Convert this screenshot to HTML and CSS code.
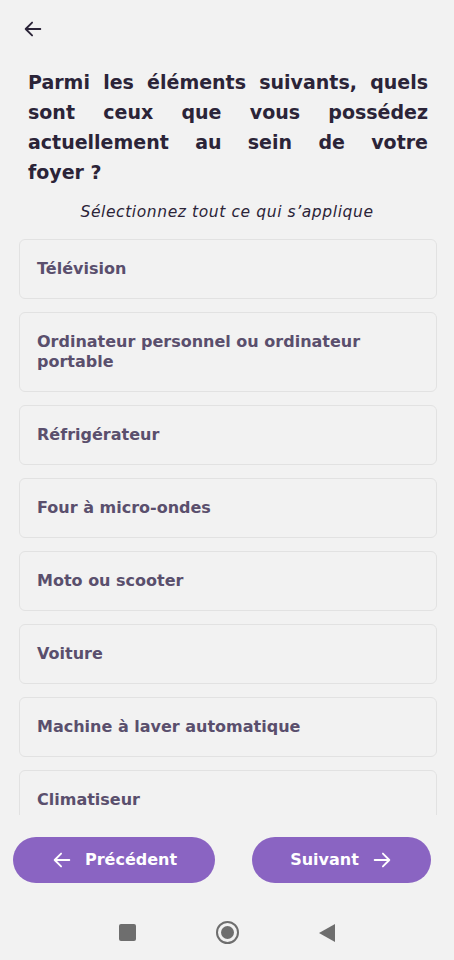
FILE: index.html
```html
<!DOCTYPE html>
<html lang="fr">
<head>
    <meta charset="UTF-8">
    <meta name="viewport" content="width=device-width, initial-scale=1.0">
    <title>Questionnaire - Équipements du foyer</title>
    <link rel="stylesheet" href="styles.css">
</head>
<body>
    <div class="screen">
        <!-- Top bar -->
        <div class="top-bar">
            <button class="back-btn" aria-label="Retour">
                <svg width="22" height="22" viewBox="0 0 24 24" fill="none" stroke="#2b2438" stroke-width="2" stroke-linecap="round" stroke-linejoin="round">
                    <path d="M20 12H4M11 5l-7 7 7 7"/>
                </svg>
            </button>
        </div>

        <h1 class="question">Parmi les éléments suivants, quels sont ceux que vous possédez actuellement au sein de votre foyer&nbsp;?</h1>
        <p class="hint">Sélectionnez tout ce qui s’applique</p>

        <div class="options">
            <div class="option">Télévision</div>
            <div class="option">Ordinateur personnel ou ordinateur portable</div>
            <div class="option">Réfrigérateur</div>
            <div class="option">Four à micro-ondes</div>
            <div class="option">Moto ou scooter</div>
            <div class="option">Voiture</div>
            <div class="option">Machine à laver automatique</div>
            <div class="option">Climatiseur</div>
        </div>

        <!-- Footer buttons -->
        <div class="actions">
            <button class="nav-btn prev">
                <svg width="22" height="22" viewBox="0 0 24 24" fill="none" stroke="#fff" stroke-width="2" stroke-linecap="round" stroke-linejoin="round">
                    <path d="M20 12H4M11 5l-7 7 7 7"/>
                </svg>
                <span>Précédent</span>
            </button>
            <button class="nav-btn next">
                <span>Suivant</span>
                <svg width="22" height="22" viewBox="0 0 24 24" fill="none" stroke="#fff" stroke-width="2" stroke-linecap="round" stroke-linejoin="round">
                    <path d="M4 12h16M13 5l7 7-7 7"/>
                </svg>
            </button>
        </div>

        <!-- System navigation bar -->
        <div class="system-nav">
            <span class="sys-square"></span>
            <span class="sys-circle"><span class="sys-dot"></span></span>
            <svg class="sys-back" width="16" height="18" viewBox="0 0 16 18">
                <path d="M16 0L0 9l16 9z" fill="#6e6e6e"/>
            </svg>
        </div>
    </div>
</body>
</html>
```

FILE: styles.css
```css
/* Base */
body {
    margin: 0;
    background-color: #f2f2f2;
    font-family: 'DejaVu Sans', 'Noto Sans', sans-serif;
    color: #2b2438;
}
.screen {
    height: 960px;
    display: flex;
    flex-direction: column;
}
.top-bar {
    height: 58px;
    padding-left: 21px;
    display: flex;
    align-items: center;
}
.back-btn {
    border: none;
    background: none;
    padding: 0;
    width: 24px;
    height: 24px;
    display: flex;
    align-items: center;
    justify-content: center;
    cursor: pointer;
}

/* Question */
.question {
    margin: 9px 26px 0 28px;
    font-size: 19px;
    line-height: 30px;
    font-weight: bold;
    text-align: justify;
    color: #2b2438;
}
.hint {
    margin: 15px 0 0;
    text-align: center;
    font-size: 15.5px;
    line-height: 20px;
    letter-spacing: 0.6px;
    font-style: italic;
    color: #2b2438;
}

/* Options */
.options {
    flex: 1;
    overflow: hidden;
    margin: 17px 17px 0 19px;
    display: flex;
    flex-direction: column;
    gap: 13px;
}
.option {
    flex-shrink: 0;
    padding: 19px 17px;
    border: 1px solid #e2e2e2;
    border-radius: 6px;
    font-size: 16px;
    line-height: 20px;
    font-weight: bold;
    color: #5a4f6d;
}

/* Footer buttons */
.actions {
    display: flex;
    justify-content: space-between;
    padding: 22px 23px 0 13px;
}
.nav-btn {
    height: 46px;
    padding: 0;
    border: none;
    border-radius: 23px;
    background-color: #8a64c2;
    color: #ffffff;
    font-family: inherit;
    font-size: 16px;
    line-height: 20px;
    font-weight: bold;
    display: flex;
    align-items: center;
    justify-content: center;
    gap: 12px;
    cursor: pointer;
}
.nav-btn.prev {
    width: 202px;
}
.nav-btn.next {
    width: 179px;
}

/* System nav */
.system-nav {
    height: 55px;
    padding-top: 22px;
    display: flex;
    align-items: center;
    justify-content: center;
    gap: 80px;
}
.sys-square {
    width: 17px;
    height: 17px;
    border-radius: 2px;
    background-color: #6e6e6e;
}
.sys-circle {
    width: 19px;
    height: 19px;
    border: 2px solid #6e6e6e;
    border-radius: 50%;
    display: flex;
    align-items: center;
    justify-content: center;
}
.sys-dot {
    width: 13px;
    height: 13px;
    border-radius: 50%;
    background-color: #6e6e6e;
}
```
